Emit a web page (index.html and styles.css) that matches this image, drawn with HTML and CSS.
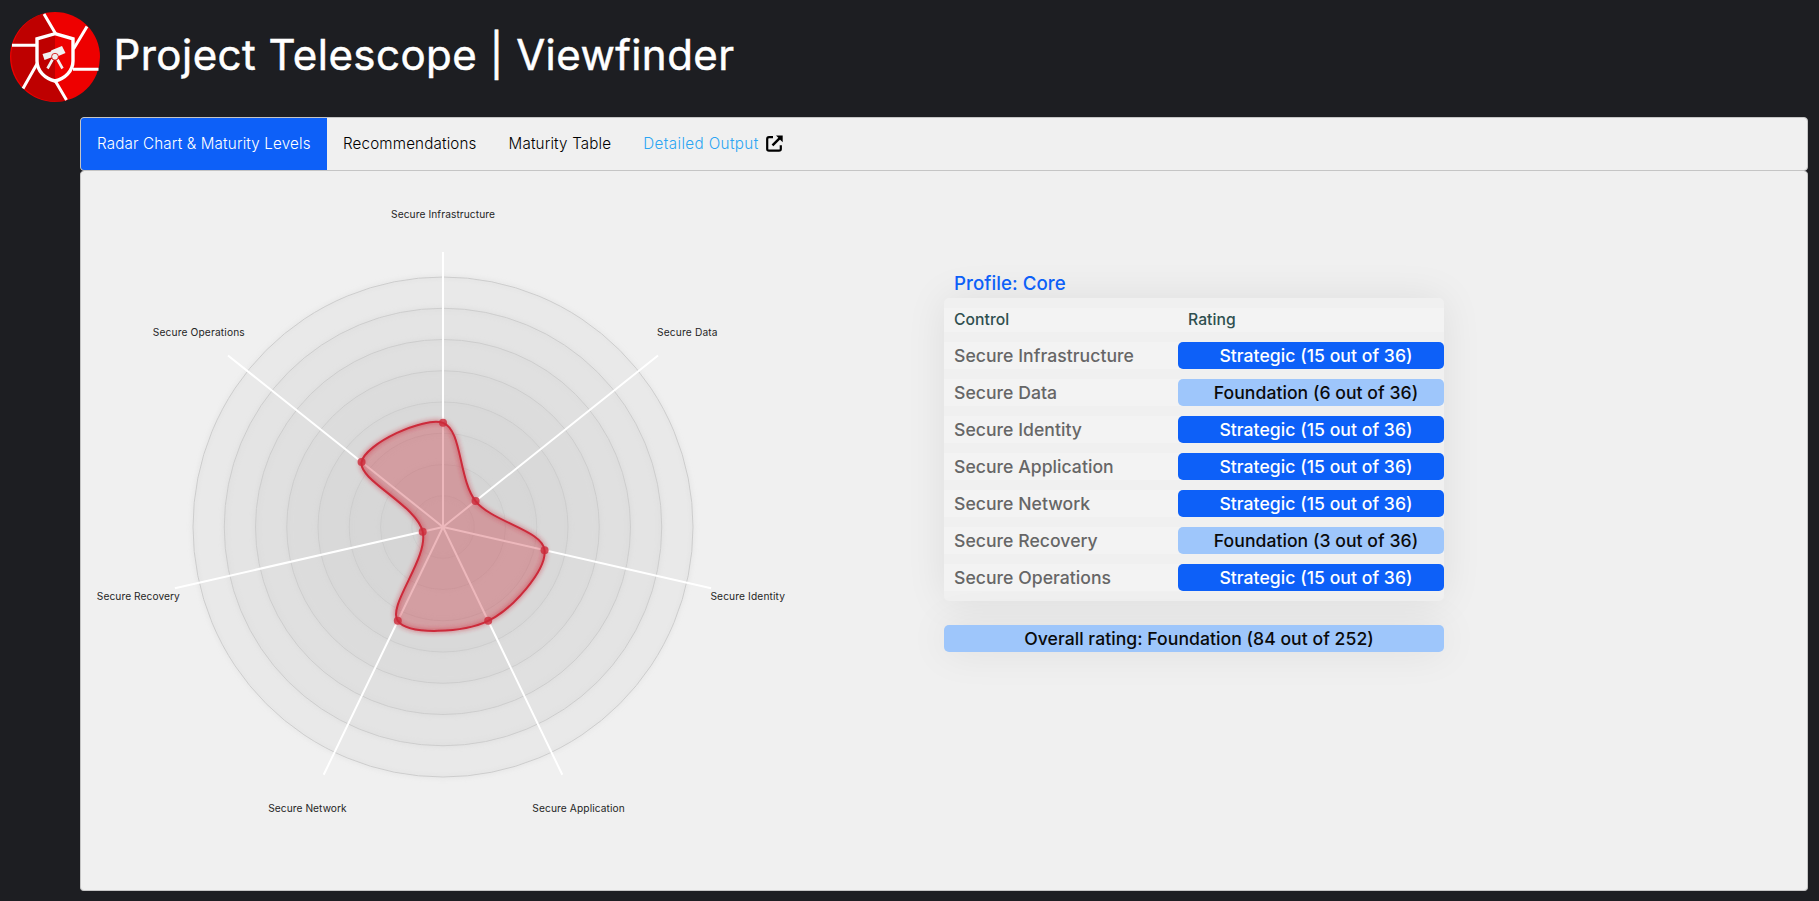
FILE: index.html
```
<!DOCTYPE html>
<html lang="en">
<head>
<meta charset="utf-8">
<title>Project Telescope | Viewfinder</title>
<link rel="stylesheet" href="styles.css">
</head>
<body>
<header class="masthead">
  <svg class="logo" viewBox="0 0 90 90" width="90" height="90" aria-hidden="true">
    <circle cx="45" cy="45" r="45" fill="#e00"/>
    <path d="M33 1.7A45 45 0 0 0 57 88.4L45 68V21Z" fill="#be0000"/>
    <g fill="none" stroke="#fff" stroke-width="3">
      <path d="M34 2L45.5 21.5M77 14.5L63.5 37M88.500 57.300H63M56.500 88L45 68.500M13 76.500L27.500 51M2 33.200H27"/>
    </g>
    <path d="M45 21.700L27 26.500V49C27 59 35 66 45 68.800Z" fill="#be0000"/>
    <path d="M45 21.700L63 26.500V49C63 59 55 66 45 68.800Z" fill="#e00"/>
    <path d="M45 21.700L63 26.800V49C63 59 55 66.500 45 69C35 66.500 27 59 27 49V26.800Z" fill="none" stroke="#fff" stroke-width="3.400"/>
    <path d="M32.500 42L40.500 39.700L41.500 38.200L52 34L55.500 41L45 45.500L42.500 45L34.500 48Z" fill="#f0f0f0"/>
    <path d="M42.500 47.500L37.500 56.500M47.500 47.500L52.500 56.500" stroke="#f0f0f0" stroke-width="2.600"/>
    <circle cx="45" cy="44.700" r="3.400" fill="#f0f0f0" stroke="#d00000" stroke-width=".8"/>
  </svg>
  <h1 class="title">Project Telescope | Viewfinder</h1>
</header>

<main class="main">
  <nav class="tabs">
    <a class="tab tab-active">Radar Chart &amp; Maturity Levels</a>
    <a class="tab">Recommendations</a>
    <a class="tab">Maturity Table</a>
    <a class="tab tab-link"><span class="link-text">Detailed Output</span>
      <svg width="17" height="17" viewBox="0 0 17 17" aria-hidden="true">
        <path d="M7 2.200H3Q1.200 2.200 1.200 4V14Q1.200 15.700 3 15.700H13Q14.800 15.700 14.800 14V10.200" fill="none" stroke="#000" stroke-width="2.200"/>
        <path d="M6.500 10.300L14 2.800" stroke="#000" stroke-width="2.400"/>
        <path d="M10 .500H16.700V7.200L14.400 4.900L12.300 2.800Z" fill="#000"/>
      </svg>
    </a>
  </nav>

  <section class="panel">
    <svg class="radar" width="725" height="680" viewBox="-362 -355 725 680">
      <defs>
        <filter id="glow" x="-20%" y="-20%" width="140%" height="140%">
          <feGaussianBlur stdDeviation="2.5" result="b"/>
          <feMerge><feMergeNode in="b"/><feMergeNode in="SourceGraphic"/></feMerge>
        </filter>
        <path id="blob" d="M0 -104.170C19 -97.670 15.650 -47.210 32.580 -25.980C49.510 -4.750 99.460 3.210 101.560 23.180C103.660 43.150 69.660 82.070 45.200 93.850C20.740 105.630 -34.280 108.720 -45.200 93.850C-56.120 78.980 -14.270 31.110 -20.310 4.640C-26.350 -21.830 -84.830 -46.810 -81.440 -64.950C-78.050 -83.090 -19 -110.670 0 -104.170Z"/>
      </defs>
      <g class="grid">
        <circle r="250"/><circle r="218.75"/><circle r="187.5"/><circle r="156.25"/>
        <circle r="125"/><circle r="93.75"/><circle r="62.5"/><circle r="31.25"/>
      </g>
      <g class="axis">
        <path d="M0 0V-275M0 0L215 -171.460M0 0L268.100 61.190M0 0L119.320 247.770M0 0L-119.320 247.770M0 0L-268.100 61.190M0 0L-215 -171.460"/>
      </g>
      <g class="labels">
        <text x="0" y="-309" textLength="104">Secure Infrastructure</text>
        <text x="244.300" y="-191" textLength="60.500">Secure Data</text>
        <text x="304.700" y="73" textLength="74.500">Secure Identity</text>
        <text x="135.600" y="285" textLength="92.500">Secure Application</text>
        <text x="-135.600" y="285" textLength="78.500">Secure Network</text>
        <text x="-304.700" y="73" textLength="83">Secure Recovery</text>
        <text x="-244.300" y="-191" textLength="92">Secure Operations</text>
      </g>
      <use href="#blob" class="area"/>
      <use href="#blob" class="outline"/>
      <g class="dots">
        <circle cx="0" cy="-104.170" r="4"/><circle cx="32.580" cy="-25.980" r="4"/><circle cx="101.560" cy="23.180" r="4"/><circle cx="45.200" cy="93.850" r="4"/><circle cx="-45.200" cy="93.850" r="4"/><circle cx="-20.310" cy="4.640" r="4"/><circle cx="-81.440" cy="-64.950" r="4"/>
      </g>
    </svg>

    <div class="ratings">
      <h2 class="profile">Profile: Core</h2>
      <div class="table">
        <div class="row head"><span class="control">Control</span><span class="rating-head">Rating</span></div>
        <div class="row"><span class="control">Secure Infrastructure</span><span class="rating strategic">Strategic (15 out of 36)</span></div>
        <div class="row"><span class="control">Secure Data</span><span class="rating foundation">Foundation (6 out of 36)</span></div>
        <div class="row"><span class="control">Secure Identity</span><span class="rating strategic">Strategic (15 out of 36)</span></div>
        <div class="row"><span class="control">Secure Application</span><span class="rating strategic">Strategic (15 out of 36)</span></div>
        <div class="row"><span class="control">Secure Network</span><span class="rating strategic">Strategic (15 out of 36)</span></div>
        <div class="row"><span class="control">Secure Recovery</span><span class="rating foundation">Foundation (3 out of 36)</span></div>
        <div class="row"><span class="control">Secure Operations</span><span class="rating strategic">Strategic (15 out of 36)</span></div>
      </div>
      <div class="overall foundation">Overall rating: Foundation (84 out of 252)</div>
    </div>
  </section>
</main>
</body>
</html>
```
FILE: styles.css
```
* { box-sizing: border-box; }
body {
  margin: 0;
  height: 901px;
  overflow: hidden;
  background: #1d1e22;
  font-family: Inter, "Liberation Sans", sans-serif;
}
.masthead {
  display: flex;
  height: 117px;
  padding: 12px 0 0 10px;
}
.logo { flex: none; }
.title {
  margin: 0 0 0 13.5px;
  color: #fff;
  font-size: 42px;
  font-weight: 400;
  line-height: 86px;
  letter-spacing: .46px;
  white-space: nowrap;
  -webkit-text-stroke: .5px #fff;
}
.main {
  width: 1728px;
  margin-left: 80px;
}
.tabs {
  display: flex;
  height: 54px;
  border: 1px solid #c5c5c5;
  border-radius: 4px;
  background: #f0f0f0;
  overflow: hidden;
}
.tab {
  display: flex;
  align-items: center;
  padding: 0 16px 2px;
  color: #000;
  font-size: 15.2px;
  font-weight: 350;
  letter-spacing: .15px;
  white-space: nowrap;
}
.tab-active {
  width: 246px;
  background: #0d60f8;
  color: #fff;
}
.tab-link { gap: 7px; color: #2ba5f3; }
.link-text { letter-spacing: .38px; }
.panel {
  display: flex;
  height: 720px;
  border: 1px solid #c5c5c5;
  border-top: 0;
  border-radius: 4px;
  background: #f0f0f0;
}
.radar { flex: none; overflow: visible; margin-top: 1px; }
.grid circle {
  fill: #cdcdcd;
  fill-opacity: .1;
  stroke: #cdcdcd;
  filter: url(#glow);
}
.axis path { stroke: #fff; stroke-width: 2; }
.labels {
  fill: #252525;
  font-size: 10.2px;
  text-anchor: middle;
}
.area { fill: #cc333f; fill-opacity: .35; }
.outline {
  fill: none;
  stroke: #cc2a3a;
  stroke-width: 2;
  filter: url(#glow);
}
.dots { fill: #cc2a3a; fill-opacity: .8; }
.ratings {
  width: 500px;
  margin: 100px 0 0 138px;
  font-size: 17.6px;
  font-weight: 500;
  letter-spacing: .04px;
  color: #666;
}
.profile {
  margin: 0;
  padding-left: 10px;
  color: #0d60f8;
  font-size: 18.7px;
  font-weight: 500;
  line-height: 26px;
}
.table {
  display: grid;
  gap: 10px;
  margin-top: 1px;
  padding: 10px 0;
  border-radius: 5px;
  background: #f0f0f0;
  box-shadow: 0 0 40px rgba(0, 0, 0, .08);
}
.row {
  display: grid;
  grid-template-columns: 234px 1fr;
  height: 27px;
  line-height: 27px;
  background: #f3f3f3;
}
.head {
  height: 24px;
  line-height: 24px;
  color: #2f4f4f;
  font-size: 15.7px;
}
.control, .rating-head { padding-left: 10px; }
.rating {
  padding-left: 10px;
  border-radius: 5px;
  text-align: center;
}
.strategic { background: #0d60f8; color: #fff; }
.foundation { background: #9ec6fb; color: #0a0a0a; }
.overall {
  height: 27px;
  margin-top: 24px;
  padding-left: 10px;
  border-radius: 5px;
  text-align: center;
  line-height: 27px;
  box-shadow: 0 0 40px rgba(0, 0, 0, .08);
}
```
